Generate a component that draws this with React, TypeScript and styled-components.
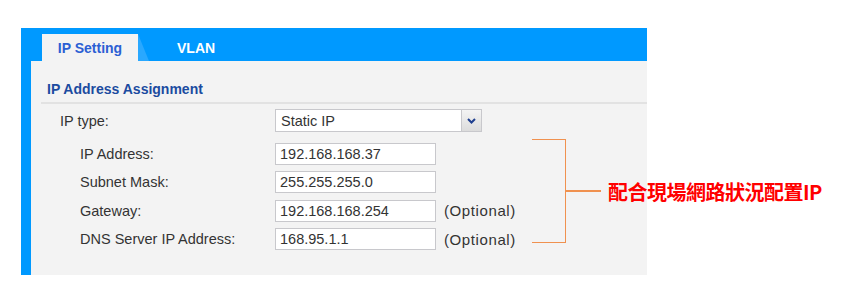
import React from "react";
import styled, { createGlobalStyle } from "styled-components";

const GlobalStyle = createGlobalStyle`
  body {
    margin: 0;
    background: #ffffff;
    font-family: "Liberation Sans", Arial, sans-serif;
  }
`;

const rows = [
  { label: "IP Address:", value: "192.168.168.37", optional: false },
  { label: "Subnet Mask:", value: "255.255.255.0", optional: false },
  { label: "Gateway:", value: "192.168.168.254", optional: true },
  { label: "DNS Server IP Address:", value: "168.95.1.1", optional: true },
];

const App: React.FC = () => {
  return (
    <Page>
      <GlobalStyle />
      <Panel>
        <TabBar>
          <Tab active>IP Setting</Tab>
          <Tab>VLAN</Tab>
        </TabBar>
        <Body>
          <SectionTitle>IP Address Assignment</SectionTitle>
          <Form>
            <TypeRow>
              <Label>IP type:</Label>
              <Select>
                <SelectValue>Static IP</SelectValue>
                <SelectButton>
                  <svg width="9" height="6" viewBox="0 0 9 6">
                    <path d="M1 1 L4.5 4.5 L8 1" fill="none" stroke="#1f3f8f" strokeWidth="2" />
                  </svg>
                </SelectButton>
              </Select>
            </TypeRow>
            {rows.map((r) => (
              <FieldRow key={r.label}>
                <Label indent>{r.label}</Label>
                <Input>{r.value}</Input>
                {r.optional && <Hint>(Optional)</Hint>}
              </FieldRow>
            ))}
          </Form>
        </Body>
      </Panel>
      <Note>
        <Bracket />
        <Stem />
        <NoteText>配合現場網路狀況配置IP</NoteText>
      </Note>
    </Page>
  );
};

const Page = styled.div`
  position: relative;
  width: 865px;
  height: 304px;
  padding: 28px 0 0 21px;
  box-sizing: border-box;
`;

const Panel = styled.div`
  width: 626px;
  height: 247px;
  display: flex;
  flex-direction: column;
`;

const TabBar = styled.div`
  height: 33px;
  background: #0099ff;
  display: flex;
  align-items: flex-end;
  padding-left: 21px;
`;

const Tab = styled.div<{ active?: boolean }>`
  position: relative;
  height: 27px;
  width: ${(p) => (p.active ? "96px" : "auto")};
  margin-left: ${(p) => (p.active ? "0" : "39px")};
  display: flex;
  align-items: center;
  justify-content: ${(p) => (p.active ? "center" : "flex-start")};
  background: ${(p) => (p.active ? "#f3f3f3" : "transparent")};
  color: ${(p) => (p.active ? "#2b5fd4" : "#ffffff")};
  font-size: 14px;
  font-weight: bold;
  padding-top: 1px;
  box-sizing: border-box;

  ${(p) =>
    p.active &&
    `
    &::after {
      content: "";
      position: absolute;
      left: 100%;
      top: 0;
      width: 11px;
      height: 100%;
      background: #29a8ff;
      clip-path: polygon(0 0, 100% 100%, 0 100%);
    }
  `}
`;

const Body = styled.div`
  flex: 1;
  background: #f3f3f3;
  border-left: 10px solid #0099ff;
  padding: 20px 0 0 10px;
`;

const SectionTitle = styled.div`
  font-size: 14px;
  font-weight: bold;
  color: #1b4ba0;
  padding: 0 0 5px 6px;
  border-bottom: 2px solid #e2e2e2;
`;

const Form = styled.div`
  display: flex;
  flex-direction: column;
  gap: 6.6px;
  padding-top: 5px;
`;

const TypeRow = styled.div`
  display: flex;
  align-items: center;
  height: 23px;
  margin-bottom: 4px;
`;

const FieldRow = styled.div`
  display: flex;
  align-items: center;
  height: 22px;
`;

const Label = styled.div<{ indent?: boolean }>`
  width: ${(p) => (p.indent ? "195px" : "215px")};
  padding-left: ${(p) => (p.indent ? "39px" : "19px")};
  font-size: 14.5px;
  color: #333333;
`;

const Select = styled.div`
  width: 207px;
  height: 23px;
  box-sizing: border-box;
  border: 1px solid #c8c8cc;
  background: #ffffff;
  display: flex;
  align-items: center;
`;

const SelectValue = styled.div`
  flex: 1;
  padding-left: 5px;
  font-size: 14.5px;
  color: #333333;
`;

const SelectButton = styled.div`
  width: 19px;
  height: 100%;
  border-left: 1px solid #c8c8cc;
  background: linear-gradient(#f4f4f4, #dcdcdc);
  display: flex;
  align-items: center;
  justify-content: center;
`;

const Input = styled.div`
  width: 161px;
  height: 22px;
  box-sizing: border-box;
  border: 1px solid #c8c8cc;
  background: #ffffff;
  padding-left: 4px;
  display: flex;
  align-items: center;
  font-size: 14.5px;
  color: #333333;
`;

const Hint = styled.div`
  margin-left: 8px;
  font-size: 15px;
  letter-spacing: 0.6px;
  color: #333333;
`;

const Note = styled.div`
  position: absolute;
  left: 532px;
  top: 139px;
  display: flex;
  align-items: center;
  height: 104px;
`;

const Bracket = styled.div`
  width: 34px;
  height: 100%;
  box-sizing: border-box;
  border: 1.5px solid #f0914f;
  border-left: none;
`;

const Stem = styled.div`
  width: 35px;
  height: 1.5px;
  background: #f0914f;
`;

const NoteText = styled.div`
  margin-left: 7px;
  font-family: "Noto Sans CJK TC", "Noto Sans CJK SC", sans-serif;
  font-size: 20px;
  font-weight: bold;
  color: #ff0000;
  letter-spacing: -0.5px;
  white-space: nowrap;
`;

export default App;
